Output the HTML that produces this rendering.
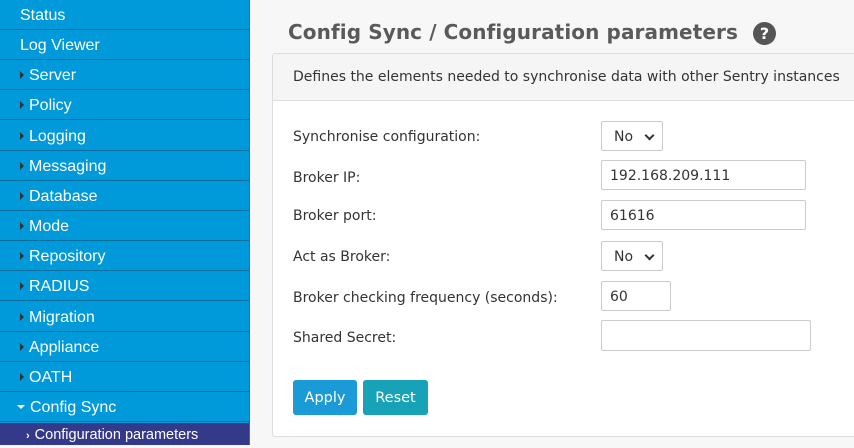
<!DOCTYPE html>
<html><head><style>
*{margin:0;padding:0;box-sizing:border-box}
body{width:854px;height:445px;overflow:hidden;background:#f7f7f7;font-family:"DejaVu Sans",Verdana,sans-serif;position:relative}
.sb{position:absolute;left:0;top:0;width:250px;height:445px;background:#0099da;border-right:1px solid #0a7fb5}
.it{position:absolute;left:0;width:249px;height:30px;border-bottom:1px solid #0b6d9c;color:#fff;font-family:"Liberation Sans",Arial,sans-serif;font-size:16px;line-height:32px}
.it .a{display:inline-block;width:0;height:0;border-left:4px solid #333;border-top:4px solid transparent;border-bottom:4px solid transparent;margin:0 5px 2px 20px;vertical-align:middle}
.sub{position:absolute;left:0;top:423px;width:249px;height:22px;background:#34398a;color:#fff;font-family:"Liberation Sans",Arial,sans-serif;font-size:14.5px;line-height:24px;padding-left:26px}
h1{position:absolute;left:288px;top:20px;font-size:20px;color:#5a5a5a;font-weight:bold;letter-spacing:0.1px}
.q{position:absolute;left:753px;top:22px;width:23px;height:23px;border-radius:50%;background:#555;color:#fff;font-size:16px;font-weight:bold;text-align:center;line-height:23px}
.card{position:absolute;left:272px;top:53px;width:590px;height:384px;background:#fff;border:1px solid #ddd;border-radius:3px}
.hd{height:47px;background:#f5f5f5;border-bottom:1px solid #ddd;font-size:14px;color:#333;padding:15px 0 0 20px;white-space:nowrap}
.lb{position:absolute;left:293px;font-size:14px;color:#333}
.in{position:absolute;background:#fff;border:1px solid #ccc;border-radius:2px;font-size:14px;color:#333;padding-left:8px;line-height:30px}
.sel{width:62px;height:30px;padding-left:12px}
.sel:after{content:"";position:absolute;right:9px;top:10px;width:5px;height:5px;border-right:2px solid #333;border-bottom:2px solid #333;transform:rotate(45deg)}
.btn{position:absolute;top:380px;height:35px;border-radius:3px;color:#fff;font-size:14.5px;line-height:37px;text-align:center}
</style></head><body>
<div class="sb">
<div class="it" style="top:0;padding-left:20px">Status</div>
<div class="it" style="top:30px;padding-left:20px">Log Viewer</div>
<div class="it" style="top:60px"><span class="a"></span>Server</div>
<div class="it" style="top:90px"><span class="a"></span>Policy</div>
<div class="it" style="top:121px"><span class="a"></span>Logging</div>
<div class="it" style="top:151px"><span class="a"></span>Messaging</div>
<div class="it" style="top:181px"><span class="a"></span>Database</div>
<div class="it" style="top:211px"><span class="a"></span>Mode</div>
<div class="it" style="top:241px"><span class="a"></span>Repository</div>
<div class="it" style="top:271px"><span class="a"></span>RADIUS</div>
<div class="it" style="top:302px"><span class="a"></span>Migration</div>
<div class="it" style="top:332px"><span class="a"></span>Appliance</div>
<div class="it" style="top:362px"><span class="a"></span>OATH</div>
<div class="it" style="top:392px"><span class="a" style="border-left:4px solid transparent;border-right:4px solid transparent;border-top:4px solid #fff;border-bottom:0;margin-left:17px"></span>Config Sync</div>
<div class="sub"><span style="font-size:11px;font-weight:bold;margin-right:5px">›</span>Configuration parameters</div>
</div>
<h1>Config Sync / Configuration parameters</h1>
<div class="q">?</div>
<div class="card"><div class="hd">Defines the elements needed to synchronise data with other Sentry instances</div></div>
<div class="lb" style="top:129px">Synchronise configuration:</div>
<div class="in sel" style="left:601px;top:121px">No</div>
<div class="lb" style="top:170px">Broker IP:</div>
<div class="in" style="left:601px;top:160px;width:205px;height:30px">192.168.209.111</div>
<div class="lb" style="top:208px">Broker port:</div>
<div class="in" style="left:601px;top:200px;width:205px;height:30px">61616</div>
<div class="lb" style="top:249px">Act as Broker:</div>
<div class="in sel" style="left:601px;top:241px">No</div>
<div class="lb" style="top:290px">Broker checking frequency (seconds):</div>
<div class="in" style="left:601px;top:281px;width:70px;height:30px">60</div>
<div class="lb" style="top:330px">Shared Secret:</div>
<div class="in" style="left:601px;top:320px;width:210px;height:31px"></div>
<div class="btn" style="left:293px;width:64px;background:#1a9bd7">Apply</div>
<div class="btn" style="left:363px;width:65px;background:#17a2b8">Reset</div>
</body></html>
